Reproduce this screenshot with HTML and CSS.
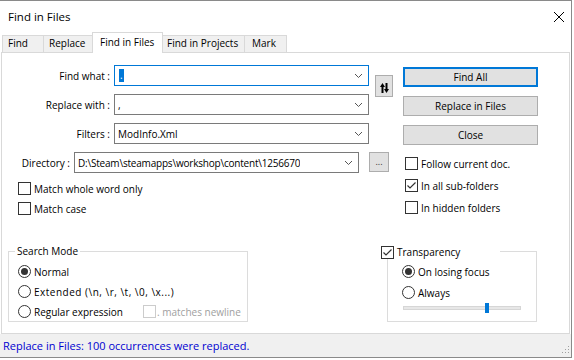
FILE: index.html
```html
<!DOCTYPE html>
<html lang="en">
<head>
  <meta charset="UTF-8">
  <title>Find in Files</title>
  <link rel="stylesheet" href="styles.css">
</head>
<body>
  <div class="window">
    <div class="titlebar">
      <span class="title">Find in Files</span>
      <svg class="close" width="10" height="10" viewBox="0 0 10 10"><path d="M0 0L10 10M10 0L0 10" stroke="#000" stroke-width="1"/></svg>
    </div>

    <div class="tabs">
      <div class="tab t-find">Find</div>
      <div class="tab t-replace">Replace</div>
      <div class="tab t-files active">Find in Files</div>
      <div class="tab t-projects">Find in Projects</div>
      <div class="tab t-mark">Mark</div>
    </div>

    <div class="panel">
      <div class="top">
        <div class="fields">
          <div class="combos">
            <div class="combo-list">
              <div class="row">
                <span class="label">Find what :</span>
                <div class="combo focus">
                  <span class="sel">.</span>
                  <svg class="chev" width="7" height="4" viewBox="0 0 7 4"><path d="M0 0L3.5 3.5L7 0" fill="none" stroke="#555"/></svg>
                </div>
              </div>
              <div class="row">
                <span class="label">Replace with :</span>
                <div class="combo">
                  <span>,</span>
                  <svg class="chev" width="7" height="4" viewBox="0 0 7 4"><path d="M0 0L3.5 3.5L7 0" fill="none" stroke="#555"/></svg>
                </div>
              </div>
              <div class="row">
                <span class="label">Filters :</span>
                <div class="combo">
                  <span>ModInfo.Xml</span>
                  <svg class="chev" width="7" height="4" viewBox="0 0 7 4"><path d="M0 0L3.5 3.5L7 0" fill="none" stroke="#555"/></svg>
                </div>
              </div>
            </div>
            <div class="btn swap">
              <svg width="9" height="10" viewBox="0 0 9 10">
                <path d="M2.5 10V2.5" stroke="#000" stroke-width="2"/>
                <path d="M0 4L2.5 0L5 4Z" fill="#000"/>
                <path d="M6.5 0V7.5" stroke="#000" stroke-width="2"/>
                <path d="M4 6L6.5 10L9 6Z" fill="#000"/>
              </svg>
            </div>
          </div>

          <div class="row dir">
            <span class="label">Directory :</span>
            <div class="combo wide">
              <span class="text">D:\Steam\steamapps\workshop\content\1256670</span>
              <svg class="chev" width="7" height="4" viewBox="0 0 7 4"><path d="M0 0L3.5 3.5L7 0" fill="none" stroke="#555"/></svg>
            </div>
            <div class="btn browse">...</div>
          </div>

          <div class="opts left">
            <div class="check"><span class="box"></span>Match whole word only</div>
            <div class="check"><span class="box"></span>Match case</div>
          </div>
        </div>

        <div class="actions">
          <div class="btn default">Find All</div>
          <div class="btn">Replace in Files</div>
          <div class="btn">Close</div>
          <div class="opts right">
            <div class="check"><span class="box"></span>Follow current doc.</div>
            <div class="check">
              <span class="box"><svg width="11" height="11" viewBox="0 0 11 11"><path d="M1.5 5.5L4 8L9.5 2.5" fill="none" stroke="#333" stroke-width="1.2"/></svg></span>In all sub-folders
            </div>
            <div class="check"><span class="box"></span>In hidden folders</div>
          </div>
        </div>
      </div>

      <div class="bottom">
        <fieldset class="group mode">
          <legend>Search Mode</legend>
          <div class="group-body">
            <div class="radio-row"><span class="radio on"></span>Normal</div>
            <div class="radio-row"><span class="radio"></span><span class="escapes">Extended (\n, \r, \t, \0, \x...)</span></div>
            <div class="radio-row">
              <span class="radio"></span><span class="re-label">Regular expression</span>
              <span class="check disabled"><span class="box"></span>. matches newline</span>
            </div>
          </div>
        </fieldset>

        <fieldset class="group transp">
          <legend>
            <span class="box"><svg width="11" height="11" viewBox="0 0 11 11"><path d="M1.5 5.5L4 8L9.5 2.5" fill="none" stroke="#333" stroke-width="1.2"/></svg></span>Transparency
          </legend>
          <div class="group-body">
            <div class="radio-row"><span class="radio on"></span>On losing focus</div>
            <div class="radio-row"><span class="radio"></span>Always</div>
            <div class="slider">
              <div class="track"></div>
              <div class="thumb" style="left: 82px"></div>
            </div>
          </div>
        </fieldset>
      </div>
    </div>

    <div class="status">
      <span>Replace in Files: 100 occurrences were replaced.</span>
      <svg class="grip" width="8" height="8" viewBox="0 0 8 8" fill="#a0a0a0">
        <rect x="6" y="0" width="1" height="1"/>
        <rect x="3" y="3" width="1" height="1"/><rect x="6" y="3" width="1" height="1"/>
        <rect x="0" y="6" width="1" height="1"/><rect x="3" y="6" width="1" height="1"/><rect x="6" y="6" width="1" height="1"/>
      </svg>
    </div>
  </div>
</body>
</html>
```

FILE: styles.css
```css
* {
  box-sizing: border-box;
}
body {
  margin: 0;
  background: #fff;
  font-family: "Open Sans", "Noto Sans", sans-serif;
  font-size: 10px;
  color: #000;
}
.window {
  width: 572px;
  height: 358px;
  border: 1px solid #8a8a8a;
  border-left: 0;
  display: flex;
  flex-direction: column;
}

/* title bar */
.titlebar {
  height: 31px;
  flex: none;
  display: flex;
  align-items: center;
  padding-left: 8px;
}
.title {
  font-size: 11.5px;
}
.close {
  margin-left: auto;
  margin-right: 7px;
}

/* tabs */
.tabs {
  height: 20px;
  flex: none;
  display: flex;
  align-items: flex-end;
  padding-left: 2px;
}
.tab {
  height: 17px;
  line-height: 15px;
  border: 1px solid #d9d9d9;
  border-bottom: 0;
  background: #f0f0f0;
  margin-left: -1px;
  white-space: nowrap;
}
.tab:first-child {
  margin-left: 0;
}
.tab.active {
  height: 21px;
  line-height: 18px;
  margin-bottom: -1px;
  background: #fff;
  position: relative;
  z-index: 1;
}
.t-find { width: 42px; padding-left: 5px; }
.t-replace { width: 50px; padding-left: 5px; }
.t-files { width: 71px; padding-left: 7px; }
.t-projects { width: 83px; padding-left: 4px; }
.t-mark { width: 43px; padding-left: 7px; }

/* tab page */
.panel {
  height: 282px;
  flex: none;
  margin: 0 1px;
  border: 1px solid #d9d9d9;
  padding-top: 12px;
}
.top {
  display: flex;
}
.fields {
  width: 391px;
}
.combos {
  display: flex;
}
.combo-list {
  display: flex;
  flex-direction: column;
  gap: 8px;
}
.row {
  display: flex;
  align-items: center;
  height: 21px;
}
.label {
  width: 108px;
  margin-right: 4px;
  text-align: right;
}
.combo {
  width: 255px;
  height: 21px;
  border: 1px solid #7a7a7a;
  display: flex;
  align-items: center;
  padding-left: 3px;
  background: #fff;
  white-space: nowrap;
}
.combo.focus {
  border-color: #0078d7;
}
.sel {
  background: #0078d7;
  color: #fff;
  margin-left: 1px;
  padding: 0 1px;
  line-height: 13px;
}
.chev {
  margin-left: auto;
  margin-right: 6px;
  flex: none;
}
.dir {
  margin-top: 8px;
}
.dir .label {
  width: 68px;
}
.combo.wide {
  width: 285px;
}
.combo .text {
  overflow: hidden;
  letter-spacing: -0.2px;
}

/* buttons */
.btn {
  height: 20px;
  background: #e1e1e1;
  border: 1px solid #adadad;
  display: flex;
  align-items: center;
  justify-content: center;
}
.btn.default {
  border-color: #0078d7;
  box-shadow: inset 0 0 0 1px #0078d7;
}
.swap {
  width: 18px;
  height: 22px;
  margin-left: 6px;
  margin-top: 10px;
  padding-top: 3px;
}
.browse {
  width: 20px;
  margin-left: 10px;
  margin-top: -2px;
  font-size: 9px;
  align-items: flex-end;
  padding-bottom: 3px;
  color: #333;
}
.actions {
  width: 135px;
  margin-left: 10px;
  margin-top: 2px;
  display: flex;
  flex-direction: column;
  gap: 9px;
}

/* checkboxes */
.opts {
  display: flex;
  flex-direction: column;
}
.opts.left {
  margin-top: 9px;
  padding-left: 16px;
  gap: 7px;
}
.opts.right {
  margin-top: 3px;
  padding-left: 2px;
  gap: 9px;
}
.check {
  display: flex;
  align-items: center;
  height: 13px;
  gap: 3px;
  white-space: nowrap;
}
.box {
  width: 13px;
  height: 13px;
  flex: none;
  border: 1px solid #333;
  background: #fff;
  display: flex;
  align-items: center;
  justify-content: center;
}
.check.disabled {
  color: #a0a0a0;
  gap: 1px;
}
.check.disabled .box {
  border-color: #ccc;
}

/* group boxes */
.bottom {
  display: flex;
  margin-top: 29px;
}
.group {
  margin: 0;
  padding: 0;
  border: 1px solid #dcdcdc;
}
.group legend {
  height: 15px;
  line-height: 15px;
  padding: 0 2px;
}
.mode {
  width: 240px;
  margin-left: 6px;
}
.mode legend {
  margin-left: 6px;
}
.mode .group-body {
  padding: 6px 0 3px 9px;
  display: flex;
  flex-direction: column;
  gap: 7px;
}
.escapes {
  letter-spacing: 0.5px;
}
.transp {
  width: 150px;
  margin-left: 139px;
}
.transp legend {
  width: 119px;
  margin-left: -7px;
  padding: 2px 0 0;
  background: #fff;
  display: flex;
  align-items: center;
  gap: 3px;
}
.transp .group-body {
  padding: 6px 0 8px 14px;
  display: flex;
  flex-direction: column;
  gap: 8px;
}
.radio-row {
  display: flex;
  align-items: center;
  height: 13px;
  gap: 3px;
  white-space: nowrap;
}
.radio {
  width: 13px;
  height: 13px;
  flex: none;
  border: 1px solid #333;
  border-radius: 50%;
  display: flex;
  align-items: center;
  justify-content: center;
}
.radio.on::after {
  content: "";
  width: 7px;
  height: 7px;
  border-radius: 50%;
  background: #333;
}
.re-label {
  width: 106px;
}

/* slider */
.slider {
  position: relative;
  width: 118px;
  height: 10px;
  margin: -4px 0 0 1px;
  display: flex;
  align-items: center;
}
.track {
  width: 100%;
  height: 4px;
  background: #e7e7e7;
  border: 1px solid #d6d6d6;
}
.thumb {
  position: absolute;
  top: 0;
  width: 4px;
  height: 10px;
  background: #0078d7;
}

/* status bar */
.status {
  flex: 1;
  background: #f0f0f0;
  display: flex;
  align-items: center;
  padding-left: 3px;
  font-size: 11px;
  color: #0000d0;
}
.grip {
  margin-left: auto;
  margin-right: 1px;
  margin-top: 9px;
}
```
